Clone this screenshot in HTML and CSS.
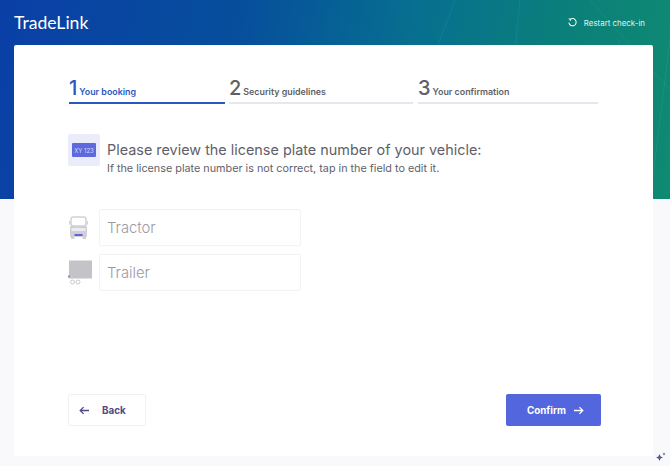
FILE: index.html
```html
<!DOCTYPE html>
<html lang="en">
<head>
    <meta charset="UTF-8">
    <meta name="viewport" content="width=device-width, initial-scale=1.0">
    <title>TradeLink check-in</title>
    <link rel="stylesheet" href="styles.css">
</head>
<body>
    <header class="hero">
        <svg class="hero-lines" viewBox="0 0 670 199" preserveAspectRatio="none" aria-hidden="true">
            <path d="M380 199 L455 0 M500 199 L520 0 M590 0 L670 90 M650 199 L670 40 M620 40 L580 199" />
        </svg>
        <div class="topbar">
            <span class="logo">TradeLink</span>
            <a class="restart">
                <svg class="restart-icon" viewBox="0 0 12 12" aria-hidden="true">
                    <path d="M3.4 2.6 A4 4 0 1 1 2 6" />
                    <path d="M1.9 1.8 L3.4 2.6 L3.7 4.3" />
                </svg>
                Restart check-in
            </a>
        </div>
    </header>

    <main class="card">
        <!-- Steps -->
        <ol class="steps">
            <li class="step step-active"><span class="step-num">1</span><span class="step-label">Your booking</span></li>
            <li class="step step-second"><span class="step-num">2</span><span class="step-label">Security guidelines</span></li>
            <li class="step step-third"><span class="step-num">3</span><span class="step-label">Your confirmation</span></li>
        </ol>

        <section class="intro">
            <div class="plate-box"><span class="plate">XY 123</span></div>
            <div>
                <h1 class="intro-title">Please review the license plate number of your vehicle:</h1>
                <p class="intro-text">If the license plate number is not correct, tap in the field to edit it.</p>
            </div>
        </section>

        <!-- Vehicle fields -->
        <div class="fields">
            <div class="field">
                <svg class="field-icon" viewBox="0 0 24 26" aria-hidden="true">
                    <rect x="3" y="2" width="15" height="9" rx="2.5" fill="none" stroke="#d2d2d8" stroke-width="1.5" />
                    <rect x="1" y="6" width="1.5" height="3.5" fill="#d2d2d8" />
                    <rect x="18.5" y="6" width="1.5" height="3.5" fill="#d2d2d8" />
                    <rect x="2" y="11" width="17" height="11" rx="1" fill="#cfcfd5" />
                    <rect x="3.5" y="13" width="14" height="3" fill="#ebebf0" />
                    <rect x="6.5" y="19" width="8" height="2" fill="#5b67de" />
                    <rect x="3" y="22" width="3.5" height="2" fill="#cfcfd5" />
                    <rect x="14.5" y="22" width="3.5" height="2" fill="#cfcfd5" />
                </svg>
                <input class="field-input" type="text" placeholder="Tractor">
            </div>
            <div class="field">
                <svg class="field-icon" viewBox="0 0 24 26" aria-hidden="true">
                    <rect x="1" y="0.5" width="23" height="18" fill="#c4c4c8" />
                    <rect x="0" y="15.5" width="2" height="2" fill="#8a8da6" />
                    <circle cx="4.5" cy="22" r="2" fill="none" stroke="#c4c4c8" stroke-width="0.9" />
                    <circle cx="10" cy="22" r="2" fill="none" stroke="#c4c4c8" stroke-width="0.9" />
                </svg>
                <input class="field-input" type="text" placeholder="Trailer">
            </div>
        </div>

        <div class="actions">
            <button class="btn btn-back">
                <svg class="btn-icon" viewBox="0 0 12 10" aria-hidden="true"><path d="M11 5 H1.5 M5 1.2 L1.2 5 L5 8.8" /></svg>
                Back
            </button>
            <button class="btn btn-confirm">
                Confirm
                <svg class="btn-icon" viewBox="0 0 12 10" aria-hidden="true"><path d="M1 5 H10.5 M7 1.2 L10.8 5 L7 8.8" /></svg>
            </button>
        </div>
    </main>

    <svg class="sparkle" viewBox="0 0 10 10" aria-hidden="true">
        <path d="M3.5 2 L4.6 4.4 L7 5.5 L4.6 6.6 L3.5 9 L2.4 6.6 L0 5.5 L2.4 4.4 Z" />
        <path d="M8 0.5 L8.5 1.5 L9.5 2 L8.5 2.5 L8 3.5 L7.5 2.5 L6.5 2 L7.5 1.5 Z" />
    </svg>
</body>
</html>
```

FILE: styles.css
```css
* {
    box-sizing: border-box;
}

html, body {
    height: 466px;
}

body {
    margin: 0;
    background-color: #f9f9fc;
    font-family: "Inter", "Liberation Sans", sans-serif;
    color: #5c5c66;
    overflow: hidden;
    position: relative;
}

.hero {
    position: relative;
    height: 199px;
    background: linear-gradient(100deg, #0a3fa6 0%, #064f9c 35%, #07708f 60%, #0b8079 82%, #0f8a72 100%);
    overflow: hidden;
}

.hero-lines {
    position: absolute;
    inset: 0;
    width: 100%;
    height: 100%;
}

.hero-lines path {
    stroke: rgba(255, 255, 255, 0.06);
    stroke-width: 1;
    fill: none;
}

.topbar {
    position: relative;
    display: flex;
    justify-content: space-between;
    align-items: center;
    height: 45px;
    padding: 0 25px 0 14px;
}

.logo {
    font-family: "Lato", sans-serif;
    font-size: 17.6px;
    color: #fff;
}

.restart {
    display: flex;
    align-items: center;
    gap: 6px;
    font-size: 7.9px;
    color: #e3f1ee;
}

.restart-icon {
    width: 11px;
    height: 11px;
    fill: none;
    stroke: #fff;
    stroke-width: 1.1;
}

.card {
    position: relative;
    width: 639px;
    height: 411px;
    margin: -154px 0 0 14px;
    padding: 31px 52px 30px 54px;
    display: flex;
    flex-direction: column;
    background-color: #fff;
    border-radius: 2px;
}

/* Steps */
.steps {
    display: flex;
    gap: 4px;
    margin: 0 0 0 1px;
    padding: 0;
    list-style: none;
}

.step {
    display: flex;
    align-items: baseline;
    gap: 2px;
    height: 28px;
    border-bottom: 2px solid #e6e6ee;
    line-height: 24px;
    color: #5f5f69;
}

.step-active {
    width: 156px;
    border-bottom-color: #2a58c0;
    color: #2a58c0;
}

.step-second {
    width: 184px;
}

.step-third {
    width: 180px;
    margin-left: 1px;
}

.step-num {
    font-size: 20px;
    font-weight: 500;
}

.step-label {
    font-size: 8.9px;
    font-weight: 600;
}

/* Intro */
.intro {
    display: flex;
    gap: 7px;
    margin: 30px 0 0;
}

.plate-box {
    display: flex;
    align-items: center;
    justify-content: center;
    flex: none;
    width: 32px;
    height: 32px;
    background-color: #ebecf9;
    border-radius: 2px;
}

.plate {
    display: block;
    width: 24px;
    padding: 3.5px 0;
    background-color: #5d69dc;
    border-radius: 1px;
    font-size: 6px;
    line-height: 7px;
    text-align: center;
    color: #d5d9f8;
}

.intro-title {
    margin: 6px 0 0;
    font-size: 14.4px;
    font-weight: 400;
    line-height: 20px;
    color: #5f5f69;
}

.intro-text {
    margin: 2px 0 0;
    font-size: 10.8px;
    line-height: 14px;
    color: #5f5f69;
}

/* Fields */
.fields {
    display: flex;
    flex-direction: column;
    gap: 8px;
    margin-top: 33px;
}

.field {
    display: flex;
    align-items: center;
    gap: 7px;
}

.field-icon {
    flex: none;
    width: 24px;
    height: 26px;
}

.field-input {
    width: 202px;
    height: 37px;
    padding: 0 7px;
    background-color: #fff;
    border: 1px solid #f3f3f6;
    border-radius: 2px;
    font-family: inherit;
    font-size: 14.8px;
    font-weight: 300;
    color: #5f5f69;
}

.field-input::placeholder {
    color: #9a9aa4;
    opacity: 1;
}

/* Actions */
.actions {
    display: flex;
    justify-content: space-between;
    margin-top: auto;
}

.btn {
    display: flex;
    align-items: center;
    height: 32px;
    padding-bottom: 1px;
    border-radius: 2px;
    font-family: inherit;
    font-size: 9.8px;
    font-weight: 700;
}

.btn-icon {
    width: 11px;
    height: 9px;
    fill: none;
    stroke: currentColor;
    stroke-width: 1.4;
}

.btn-back {
    gap: 12px;
    width: 78px;
    padding-left: 10px;
    background-color: #fff;
    border: 1px solid #f1f1f5;
    color: #4d4a86;
}

.btn-confirm {
    gap: 7px;
    width: 95px;
    padding-left: 21px;
    background-color: #5466de;
    border: none;
    color: #fff;
}

.sparkle {
    position: absolute;
    left: 656px;
    top: 452px;
    width: 10px;
    height: 10px;
    fill: #4b5a8c;
}
```
